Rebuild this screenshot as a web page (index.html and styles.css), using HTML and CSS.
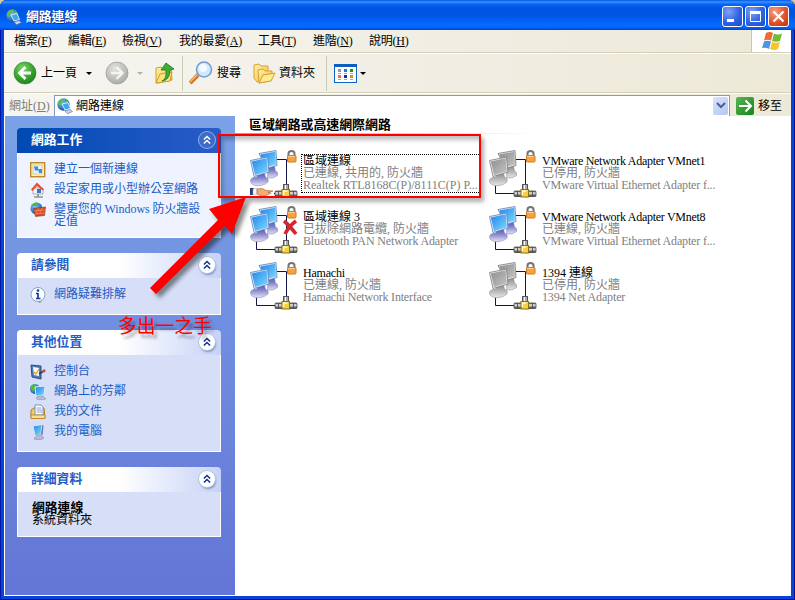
FILE: index.html
```html
<!DOCTYPE html>
<html lang="zh-Hant">
<head>
<meta charset="utf-8">
<title>網路連線</title>
<link rel="stylesheet" href="styles.css">
</head>
<body>
<svg class="defs" width="0" height="0" aria-hidden="true">
  <defs>
    <linearGradient id="blueScreen" x1="0" y1="0" x2="1" y2="1"><stop offset="0" stop-color="#2484ea"/><stop offset="1" stop-color="#7adcff"/></linearGradient>
    <linearGradient id="grayScreen" x1="0" y1="0" x2="1" y2="1"><stop offset="0" stop-color="#8e8e8e"/><stop offset="1" stop-color="#c4c4c4"/></linearGradient>
    <linearGradient id="blueBase" x1="0" y1="0" x2="0" y2="1"><stop offset="0" stop-color="#4040b0"/><stop offset=".5" stop-color="#8888cc"/><stop offset="1" stop-color="#e4e4f2"/></linearGradient>
    <linearGradient id="grayBase" x1="0" y1="0" x2="0" y2="1"><stop offset="0" stop-color="#7b7b7b"/><stop offset="1" stop-color="#e8e8e8"/></linearGradient>
    <linearGradient id="pipe" x1="0" y1="0" x2="0" y2="1"><stop offset="0" stop-color="#555"/><stop offset=".35" stop-color="#eee"/><stop offset="1" stop-color="#333"/></linearGradient>
    <linearGradient id="folder" x1="0" y1="0" x2="1" y2="1"><stop offset="0" stop-color="#fff3a8"/><stop offset="1" stop-color="#f0bd3e"/></linearGradient>
    <radialGradient id="greenBall" cx=".4" cy=".3" r=".75"><stop offset="0" stop-color="#7fd868"/><stop offset=".6" stop-color="#37a32c"/><stop offset="1" stop-color="#237d1c"/></radialGradient>
    <radialGradient id="grayBall" cx=".4" cy=".3" r=".75"><stop offset="0" stop-color="#e2e2de"/><stop offset="1" stop-color="#a9a9a5"/></radialGradient>
    <radialGradient id="globe" cx=".35" cy=".3" r=".8"><stop offset="0" stop-color="#7cc4ff"/><stop offset="1" stop-color="#08489c"/></radialGradient>

    <symbol id="wires" viewBox="0 0 50 50">
      <path d="M28 9.500h9.500V34M7.500 35v8.500H26" fill="none" stroke="#12124e"/>
      <path d="M39.500 6V3.500q0-2.500 3-2.500t3 2.500V6" fill="none" stroke="#747474" stroke-width="2"/>
      <rect x="38.500" y="5.500" width="8.500" height="6.500" rx="1" fill="#f9a13c" stroke="#d07a1c"/><path d="M39.500 6.500h6" stroke="#ffd391"/>
      <rect x="34.500" y="34.500" width="5" height="7" fill="#aaa" stroke="#555"/><path d="M36.500 35v6" stroke="#fff"/>
      <rect x="26" y="41" width="22" height="5.500" rx="1" fill="url(#pipe)" stroke="#333" stroke-width=".7"/>
      <path d="M29.500 41v5M44.500 41v5" stroke="#444" stroke-width=".8"/>
      <rect x="33" y="39.500" width="7.500" height="7.500" fill="#f4cf45" stroke="#8f7108"/><path d="M34.500 45v-4h4" stroke="#fffad0" stroke-width="1.500" fill="none"/>
    </symbol>
    <g id="backBase"><path d="M19 15l6-1 1.500 7q3.500 1.500 2 4.500-4 3.500-10 2.500z"/></g>
    <g id="frontBase"><path d="M8 23l7-2 1.500 6q4 2 2.500 5-5 4.500-13 3.500-6-2-4-6.500 2-2 6-2z"/></g>
    <symbol id="pcs-on" viewBox="0 0 50 50">
      <use href="#backBase" fill="url(#blueBase)" stroke="#8d8dc0" stroke-width=".6"/>
      <path d="M10 3.500L27 .5l1 15-10 3z" fill="#dfe5f6" stroke="#5e7fb8" stroke-width=".8"/><path d="M11.500 4.500L26.200 1.800l.8 12.700-12 3z" fill="url(#blueScreen)"/>
      <use href="#frontBase" fill="url(#blueBase)" stroke="#8d8dc0" stroke-width=".6"/>
      <path d="M1.500 10.500L18.500 7l1.500 15L5 26.500z" fill="#e8edfb" stroke="#5e7fb8" stroke-width=".8"/><path d="M2.800 11.500L17.600 8.300l1.300 13L6 25z" fill="url(#blueScreen)"/>
    </symbol>
    <symbol id="pcs-off" viewBox="0 0 50 50">
      <use href="#backBase" fill="url(#grayBase)" stroke="#999" stroke-width=".6"/>
      <path d="M10 3.500L27 .5l1 15-10 3z" fill="#e2e2e2" stroke="#777" stroke-width=".8"/><path d="M11.500 4.500L26.200 1.800l.8 12.700-12 3z" fill="url(#grayScreen)"/>
      <use href="#frontBase" fill="url(#grayBase)" stroke="#999" stroke-width=".6"/>
      <path d="M1.500 10.500L18.500 7l1.500 15L5 26.500z" fill="#eee" stroke="#777" stroke-width=".8"/><path d="M2.800 11.500L17.600 8.300l1.300 13L6 25z" fill="url(#grayScreen)"/>
    </symbol>
    <symbol id="net" viewBox="0 0 16 16">
      <circle cx="6.500" cy="6.500" r="6.200" fill="url(#globe)"/>
      <path d="M2 3q3-3 6-2L6 4 4 5 3 8 1 6zM8 3l2-1 2 3-3 1z" fill="#58bf48"/>
      <path d="M5 6l6-1.500 2.500 6L8 12z" fill="#39a8f4" stroke="#dfe8f8"/><path d="M8 13l5-1.500 2.500 2-5 2.300z" fill="#ccd3e8" stroke="#506a9a" stroke-width=".6"/>
    </symbol>
    <symbol id="chev" viewBox="0 0 18 18">
      <path d="M5.500 8.500L9 5l3.500 3.500M5.500 13L9 9.500l3.500 3.500" fill="none" stroke="currentColor" stroke-width="1.700"/>
    </symbol>
  </defs>
</svg>

<div class="window">
  <header class="titlebar">
    <svg class="i16" viewBox="0 0 16 16"><use href="#net"/></svg>
    <h1>網路連線</h1>
    <div class="controls">
      <button class="ctl"><svg viewBox="0 0 19 19"><path d="M4 13.500h7" stroke="#fff" stroke-width="3"/></svg></button>
      <button class="ctl"><svg viewBox="0 0 19 19"><path d="M4.500 5v9.500h10V5" fill="none" stroke="#fff"/><path d="M4 5.500h11" stroke="#fff" stroke-width="3"/></svg></button>
      <button class="ctl close"><svg viewBox="0 0 19 19"><path d="M4.500 4.500l10 10m0-10l-10 10" stroke="#fff" stroke-width="2.200"/></svg></button>
    </div>
  </header>

  <div class="chrome">
    <nav class="menubar">
      <span class="m1">檔案(<u>F</u>)</span><span class="m2">編輯(<u>E</u>)</span><span class="m3">檢視(<u>V</u>)</span><span class="m4">我的最愛(<u>A</u>)</span><span class="m5">工具(<u>T</u>)</span><span class="m6">進階(<u>N</u>)</span><span class="m7">說明(<u>H</u>)</span>
      <div class="flag">
        <svg width="20" height="18" viewBox="0 0 20 18">
          <path d="M4 1q4-2 7 0L9 8.500Q6 7 2 8.500z" fill="#ee6a35"/><path d="M12 1.500q4 2 8 0L18 9q-4 1.500-8 0z" fill="#77bb3c"/>
          <path d="M2 9.500q4-1.500 7 0L7 17q-3-2-7-1z" fill="#4c95e4"/><path d="M10 10q4 1.500 8 0l-2 7q-4 2-8 0z" fill="#f8c52c"/>
        </svg>
      </div>
    </nav>

    <div class="toolbar">
      <svg class="ball" viewBox="0 0 24 24"><circle cx="12" cy="12" r="11" fill="url(#greenBall)" stroke="#398b33" stroke-width=".7"/><path d="M12.500 6L6.500 12l6 6M7 12H18" fill="none" stroke="#fff" stroke-width="2.800"/></svg>
      <span class="t-back">上一頁</span><i class="tri"></i>
      <svg class="ball fwd" viewBox="0 0 24 24"><circle cx="12" cy="12" r="11" fill="url(#grayBall)" stroke="#999" stroke-width=".7"/><path d="M11.500 6l6 6-6 6M17 12H6" fill="none" stroke="#f4f4f0" stroke-width="2.400"/></svg>
      <i class="tri dim"></i>
      <svg class="up" width="20" height="23" viewBox="0 0 20 23"><path d="M1 6l5-1 2 2 8-1 1 12-14 3H1z" fill="url(#folder)" stroke="#d1a02b"/><path d="M1 21l4-9 12-2-2 9z" fill="#fbe27c" stroke="#cf9c27"/><path d="M7 19q5-2 4-11H6l5-7 8 6-4 1q0 10-8 11z" fill="#3cae35" stroke="#1e741c" stroke-width=".8"/></svg>
      <i class="vsep"></i>
      <svg class="find" width="24" height="24" viewBox="0 0 24 24"><path d="M9 14l-8 8" stroke="#d07428" stroke-width="4"/><path d="M8 14l-7 7" stroke="#f8b97a" stroke-width="1.500"/><circle cx="15" cy="8.500" r="7.500" fill="#cdeaff" stroke="#7c9bd3" stroke-width="1.600"/><circle cx="14" cy="7" r="4" fill="#f3fbff"/></svg>
      <span class="t-find">搜尋</span>
      <svg class="fold" width="23" height="21" viewBox="0 0 23 21"><path d="M1 2l5-1 2 2h7v4l-2 10-9 2-3-4z" fill="url(#folder)" stroke="#d8a233"/><path d="M5 7l5-1 2 2h7v3l-2 7-11 2z" fill="url(#folder)" stroke="#d8a233"/><path d="M6 20l4-8 12-2-4 8z" fill="#ffeb92" stroke="#d39e2b"/></svg>
      <span class="t-fold">資料夾</span>
      <i class="vsep s2"></i>
      <svg class="view" width="23" height="19" viewBox="0 0 23 19"><rect x=".5" y=".5" width="22" height="18" fill="#fff" stroke="#0c67c4"/><path d="M0 1.500h23" stroke="#0c5ec0" stroke-width="3"/><path d="M4 6.500h3" stroke="#8f8fc8" stroke-width="3"/><path d="M10 6.500h3" stroke="#2e71df" stroke-width="3"/><path d="M16 6.500h3" stroke="#139a13" stroke-width="3"/><path d="M4 12.500h3" stroke="#f36d43" stroke-width="3"/><path d="M10 12.500h3" stroke="#0c3795" stroke-width="3"/><path d="M16 12.500h3" stroke="#cc9812" stroke-width="3"/><path d="M4 9.500h3m3 0h3m3 0h3M4 15.500h3m3 0h3m3 0h3" stroke="#aaa"/></svg>
      <i class="tri tv"></i>
    </div>

    <div class="addressbar">
      <span class="addr-label">網址(<u>D</u>)</span>
      <div class="field">
        <svg class="i16" viewBox="0 0 16 16"><use href="#net"/></svg>
        <span>網路連線</span>
        <button class="drop"><svg width="10" height="7" viewBox="0 0 10 7"><path d="M1 1l4 4 4-4" fill="none" stroke="#4d6185" stroke-width="2"/></svg></button>
      </div>
      <button class="go"><svg viewBox="0 0 18 18"><path d="M9.500 3.500L15 9l-5.500 5.500M14.500 9H3" fill="none" stroke="#fff" stroke-width="2"/></svg></button>
      <span class="go-label">移至</span>
    </div>
  </div>

  <main class="content">
    <aside class="side">
      <section class="panel primary p1">
        <h2>網路工作<svg class="chev" viewBox="0 0 18 18"><use href="#chev"/></svg></h2>
        <div class="body">
          <a><svg class="i16" viewBox="0 0 16 16"><rect x=".7" y=".7" width="14" height="14" fill="#faf0c2" stroke="#bc8a2b" stroke-width="1.400"/><rect x="3" y="3" width="9" height="9" fill="#e6f1fc" stroke="#d9b75f" stroke-width=".6"/><path d="M4 4.500h4v4H5zM8 7h4v4H9z" fill="#398ddf"/></svg><span>建立一個新連線</span></a>
          <a><svg class="i16" viewBox="0 0 16 16"><path d="M3 6h10v6H3z" fill="#f4f4f8" stroke="#8894b6" stroke-width=".7"/><path d="M1 7.500L7 .5l7 7-1.500 1L7 4 2.500 9z" fill="#e2532d"/><path d="M7 7h4v4H7z" fill="#3b71c9"/><path d="M4 15h9M8 12v3" stroke="#8c9a78" stroke-width="1.700"/></svg><span>設定家用或小型辦公室網路</span></a>
          <a class="two"><svg class="i16" viewBox="0 0 16 16"><circle cx="6.500" cy="6.500" r="6" fill="url(#globe)"/><path d="M1 4q3-5 8-3L6 4z" fill="#4cb83c"/><path d="M3.500 6.500L15.500 5l-1 8.500-9 1z" fill="#d84b25" stroke="#942b12" stroke-width=".6"/><path d="M4 9l11-1M5 12l10-1M8 6l.5 3M12 5.500l-.5 3M6.500 9l.5 3M10 8.500l.5 3" stroke="#ffb18c" stroke-width=".5"/></svg><span>變更您的 Windows 防火牆設<br>定值</span></a>
        </div>
      </section>
      <section class="panel p2">
        <h2>請參閱<svg class="chev" viewBox="0 0 18 18"><use href="#chev"/></svg></h2>
        <div class="body">
          <a><svg class="i16" viewBox="0 0 16 16"><path d="M6 13h6l-2 3z" fill="#6b7c9b"/><circle cx="8" cy="7.500" r="7" fill="#fafdff" stroke="#8aa3c4"/><path d="M8 6v6M6 6.500h2M6 11.500h4.500" stroke="#163d94" stroke-width="1.700"/><circle cx="8" cy="3.500" r="1.300" fill="#163d94"/></svg><span>網路疑難排解</span></a>
        </div>
      </section>
      <section class="panel p3">
        <h2>其他位置<svg class="chev" viewBox="0 0 18 18"><use href="#chev"/></svg></h2>
        <div class="body">
          <a><svg class="i16" viewBox="0 0 16 16"><path d="M1 1l10 1v13L2 13z" fill="#4c7db9" stroke="#2d4e80"/><path d="M3 3l6 1v8l-5-1z" fill="#f8fbff"/><path d="M4 8l2 2 3-5" fill="none" stroke="#dc9c22" stroke-width="1.300"/><path d="M9 10l6-4" stroke="#28406b" stroke-width="1.700"/><circle cx="14" cy="7" r="1.500" fill="#df4938"/></svg><span>控制台</span></a>
          <a><svg class="i16" viewBox="0 0 16 16"><circle cx="5" cy="5" r="5" fill="url(#globe)"/><path d="M0 3q3-4 6-2L5 5 3 8z" fill="#4dba38"/><path d="M5 3l10-1-1 9-8 1z" fill="url(#blueScreen)" stroke="#dfe6f8"/><path d="M8 12h5l3 3-8 1-2-2z" fill="#b9bcd7" stroke="#7c80a8" stroke-width=".5"/></svg><span>網路上的芳鄰</span></a>
          <a><svg class="i16" viewBox="0 0 16 16"><path d="M1 6l3-2h10l1 10H1z" fill="#f3cc63" stroke="#b47c20"/><path d="M5 1h6l2 2v8H5z" fill="#fff" stroke="#7694c8"/><path d="M6.500 4H11M6.500 6H12M6.500 8H12" stroke="#84a4d9"/><path d="M1 11h14v3.500H1z" fill="#f9df93" stroke="#b47c20" stroke-width=".8"/></svg><span>我的文件</span></a>
          <a><svg class="i16" viewBox="0 0 16 16"><path d="M3 2l9-1.500-1 10-6 1z" fill="url(#blueScreen)" stroke="#dce4f6"/><path d="M12.500.500l1 1.500-1 9-1.500-.5z" fill="#636fa8"/><path d="M7 11h4l3 3-4 2-6-1z" fill="#b5bada" stroke="#777da9" stroke-width=".5"/></svg><span>我的電腦</span></a>
        </div>
      </section>
      <section class="panel p4">
        <h2>詳細資料<svg class="chev" viewBox="0 0 18 18"><use href="#chev"/></svg></h2>
        <div class="body info"><b>網路連線</b><span>系統資料夾</span></div>
      </section>
    </aside>

    <section class="list">
      <h3>區域網路或高速網際網路</h3>
      <div class="rule"></div>
      <div class="grid">
        <article>
          <svg class="i50" viewBox="0 0 50 50"><use href="#wires"/><path d="M0 34h25v13H0z" fill="#fff"/><use href="#pcs-on"/><path d="M1 38h4v7H1z" fill="#28406b"/><path d="M4 39l4-1v6l-4 1z" fill="#f4f6fc" stroke="#aab4cc" stroke-width=".5"/><path d="M8 39l5-.5 4 2 7 .5-5 1.500 3 .5-5 2.500-5 .5-4-2z" fill="#f2ae72" stroke="#a65d28" stroke-width=".6"/></svg>
          <div class="txt sel"><b>區域連線</b><span>已連線, 共用的, 防火牆</span><span class="w1">Realtek RTL8168C(P)/8111C(P) P...</span></div>
        </article>
        <article>
          <svg class="i50" viewBox="0 0 50 50"><use href="#wires"/><use href="#pcs-off"/></svg>
          <div class="txt"><b class="w2">VMware Network Adapter VMnet1</b><span>已停用, 防火牆</span><span class="w3">VMware Virtual Ethernet Adapter f...</span></div>
        </article>
        <article>
          <svg class="i50" viewBox="0 0 50 50"><use href="#wires"/><use href="#pcs-on"/><path d="M35 15q5 4 12 13M47 15q-7 5-11 13" fill="none" stroke="#d3272b" stroke-width="3.600"/></svg>
          <div class="txt"><b>區域連線 3</b><span>已拔除網路電纜, 防火牆</span><span class="w4">Bluetooth PAN Network Adapter</span></div>
        </article>
        <article>
          <svg class="i50" viewBox="0 0 50 50"><use href="#wires"/><use href="#pcs-on"/></svg>
          <div class="txt"><b class="w2">VMware Network Adapter VMnet8</b><span>已連線, 防火牆</span><span class="w3">VMware Virtual Ethernet Adapter f...</span></div>
        </article>
        <article>
          <svg class="i50" viewBox="0 0 50 50"><use href="#wires"/><use href="#pcs-on"/></svg>
          <div class="txt"><b class="w5">Hamachi</b><span>已連線, 防火牆</span><span class="w5">Hamachi Network Interface</span></div>
        </article>
        <article>
          <svg class="i50" viewBox="0 0 50 50"><use href="#wires"/><use href="#pcs-off"/></svg>
          <div class="txt"><b>1394 連線</b><span>已停用, 防火牆</span><span class="w6">1394 Net Adapter</span></div>
        </article>
      </div>
    </section>
  </main>

  <div class="callout-box"></div>
  <svg class="callout-arrow" width="110" height="110" viewBox="0 0 110 110"><path d="M5 94L73 26l-9-11 37-12-14 37-7-8L11 100z" fill="#f00"/></svg>
  <div class="callout-text">多出一之手</div>
</div>
</body>
</html>
```

FILE: styles.css
```css
* { box-sizing: border-box; }
body {
  margin: 0;
  width: 795px;
  height: 600px;
  overflow: hidden;
  font: 12px/12px "Liberation Serif", "Noto Sans CJK TC", serif;
  color: #000;
  background: #d8c9a0;
}
button { border: 0; padding: 0; margin: 0; }
.defs { position: absolute; }
svg { display: block; flex: none; }
span, h1, h2, h3, b { white-space: nowrap; }
.i16 { width: 16px; height: 16px; }

.window {
  position: relative;
  width: 795px;
  height: 600px;
  display: flex;
  flex-direction: column;
  padding: 0 4px 4px;
  border-radius: 7px 7px 0 0;
  background: #0842d6;
  box-shadow: inset 1px 0 #0019a8, inset -1px -1px #00138c;
  overflow: hidden;
}
.titlebar {
  height: 30px;
  flex: none;
  margin: 0 -4px;
  padding: 3px 6px 0 6px;
  display: flex;
  align-items: center;
  background: linear-gradient(#0058e6 0, #3a93ff 2px, #0a67f4 4px, #0054e3 8px, #0055e5 16px, #026afe 24px, #0368fb 27px, #0043cf 30px);
}
.titlebar h1 {
  margin: 1px 0 0 4px;
  font-size: 12.800px;
  line-height: 16px;
  color: #fff;
  text-shadow: 1px 1px #0b2f8a;
}
.controls { margin-left: auto; display: flex; gap: 2px; }
.ctl {
  width: 21px;
  height: 21px;
  border: 1px solid #fff;
  border-radius: 3px;
  background: radial-gradient(circle at 30% 25%, #7fa2f5, #2f63e2 55%, #1c4bcb);
}
.close { background: radial-gradient(circle at 30% 25%, #f3a085, #e0532c 55%, #bf3110); }

.chrome { flex: none; height: 86px; background: linear-gradient(90deg, #f6f5f1, #ece9d8); }
.menubar {
  height: 23px;
  display: flex;
  align-items: center;
  padding-left: 10px;
  border-bottom: 1px solid #d4cfb8;
}
.menubar span { line-height: 16px; letter-spacing: -.25px; }
.m1, .m2 { width: 54px; }
.m3 { width: 57px; }
.m4 { width: 79px; }
.m5 { width: 55px; }
.m6 { width: 56px; }
.flag {
  width: 40px;
  height: 22px;
  margin-left: auto;
  display: flex;
  align-items: center;
  justify-content: center;
  background: #fff;
  border-left: 1px solid #c9c5b2;
}
.toolbar {
  height: 40px;
  display: flex;
  align-items: center;
  padding-left: 9px;
  border-top: 1px solid #fff;
  border-bottom: 1px solid #d4cfb8;
}
.ball { width: 24px; height: 24px; }
.t-back { margin-left: 4px; width: 36px; }
.tri { margin-left: 9px; border: 3px solid transparent; border-top-color: #000; border-bottom: 0; }
.fwd { margin-left: 13px; }
.dim { margin-left: 8px; border-top-color: #b5b3a8; }
.up { margin-left: 12px; }
.vsep { width: 1px; height: 35px; margin-left: 7px; background: #cdc8b2; }
.find { margin-left: 6px; }
.t-find { margin-left: 4px; width: 24px; }
.fold { margin-left: 12px; }
.t-fold { margin-left: 3px; width: 36px; }
.s2 { margin-left: 11px; }
.view { margin-left: 7px; }
.tv { margin-left: 3px; }
.addressbar { height: 23px; display: flex; align-items: center; padding: 1px 0 0 5px; border-top: 1px solid #fff; }
.addr-label { width: 45px; color: #7f7c73; }
.field {
  width: 676px;
  height: 22px;
  display: flex;
  align-items: center;
  padding: 0 1px 0 2px;
  background: #fff;
  border: 1px solid #7f9db9;
}
.field span { margin-left: 3px; }
.drop {
  width: 15px;
  height: 18px;
  margin-left: auto;
  display: flex;
  align-items: center;
  justify-content: center;
  border-radius: 2px;
  background: linear-gradient(135deg, #d8e3fd, #b3c8f6);
}
.go { width: 18px; height: 18px; margin-left: 6px; border-radius: 2px; background: linear-gradient(135deg, #5bb455, #14851a); }
.go-label { margin-left: 4px; }

.content { flex: 1; min-height: 0; display: flex; border-left: 1px solid #fff; border-bottom: 1px solid #fff; background: #fff; }
.side {
  width: 230px;
  flex: none;
  padding: 12px 14px 0 12px;
  background: linear-gradient(#7ba2e7, #6375d6);
}
.panel { margin-bottom: 15px; }
.panel h2 {
  height: 25px;
  margin: 0;
  padding: 0 6px 1px 14px;
  display: flex;
  align-items: center;
  justify-content: space-between;
  font-size: 12.800px;
  line-height: 16px;
  color: #215dc6;
  border-radius: 4px 4px 0 0;
  background: linear-gradient(90deg, #fff 50%, #c6d3f7);
}
.chev { width: 16px; height: 16px; border-radius: 50%; color: #0f3190; background: #fff; box-shadow: 0 0 0 1px #b8c4e4, 1px 2px 2px #8190bb; }
.primary h2 { color: #fff; background: linear-gradient(90deg, #0049b3, #2a5cc8); }
.primary .chev { color: #fff; background: #3d6bc9; box-shadow: 0 0 0 1px #91adeb; }
.body {
  display: flex;
  flex-direction: column;
  gap: 4px;
  padding: 9px 0 0 12px;
  border: 1px solid #fff;
  border-top: 0;
  background: #d6dff7;
}
.primary .body { background: #eff3ff; }
.body a { display: flex; height: 16px; color: #215dc6; }
.body a > span { margin: 1px 0 0 8px; }
.two span { letter-spacing: -.08px; }
.p1 .body { height: 85px; }
.p2 .body { height: 37px; }
.p3 .body { height: 97px; }
.p4 .body { height: 45px; padding: 10px 0 0 14px; gap: 0; }
.info b { font-size: 12.800px; }

.list { flex: 1; min-width: 0; }
.list h3 { margin: 3px 0 2px 14px; font-size: 12.900px; line-height: 12px; }
.rule { width: 300px; height: 1px; background: linear-gradient(90deg, #70a9ef, #fff); }
.grid { display: grid; grid-template-columns: 239px 238px; grid-auto-rows: 56px; padding: 14px 0 0 15px; }
article { display: flex; align-items: flex-start; }
.i50 { width: 50px; height: 50px; margin: 2px 1px 0 -1px; }
.txt { display: flex; flex-direction: column; margin: 6px 0 0 1px; padding: 1px 0 0 2px; color: #808080; }
.txt b { font-weight: 400; color: #000; }
.w2 { letter-spacing: -.28px; }
.w3 { letter-spacing: -.17px; }
.w4 { letter-spacing: -.14px; }
.w5 { letter-spacing: -.2px; }
.w6 { letter-spacing: -.13px; }
.sel { width: 180px; height: 39px; outline: 1px dotted #000; outline-offset: -1px; }

.callout-box {
  position: absolute;
  left: 218px;
  top: 134px;
  width: 263px;
  height: 64px;
  border: 2px solid #f00;
  box-shadow: 3px 4px 4px rgba(0, 0, 0, .3), inset 3px 4px 4px rgba(0, 0, 0, .25);
}
.callout-arrow { position: absolute; left: 145px; top: 194px; filter: drop-shadow(4px 4px 2px rgba(0, 0, 0, .45)); }
.callout-text {
  position: absolute;
  left: 118px;
  top: 314px;
  font: 18.800px/22px "Noto Sans CJK TC", sans-serif;
  color: #f00;
  white-space: nowrap;
  text-shadow: 3px 4px 3px rgba(0, 0, 0, .35);
}
```
